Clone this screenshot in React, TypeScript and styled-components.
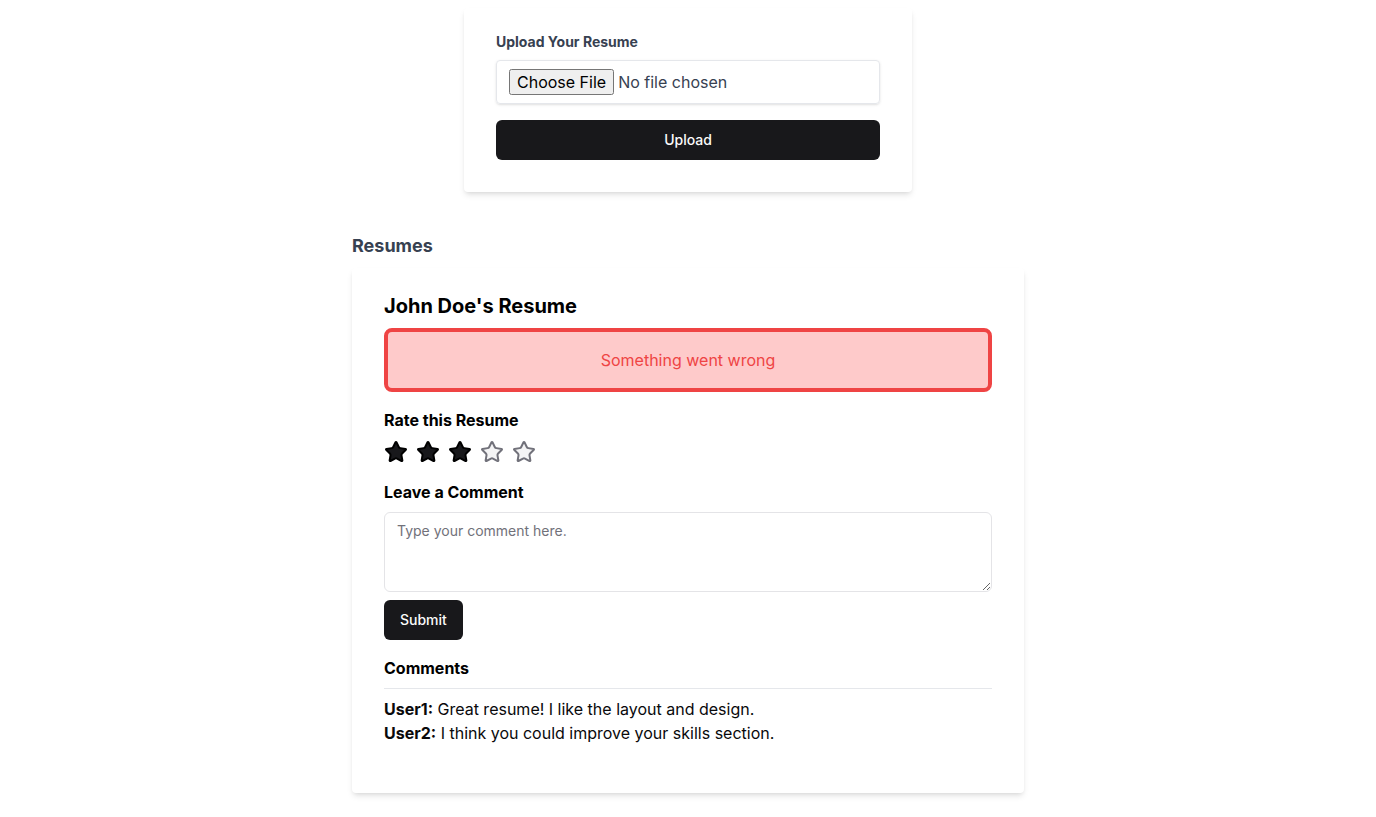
import React, { useState } from "react";
import styled, { createGlobalStyle } from "styled-components";
import { Star } from "lucide-react";

const GlobalStyle = createGlobalStyle`
  *, *::before, *::after { box-sizing: border-box; }
  body {
    margin: 0;
    background: #fff;
    color: #09090b;
    font-family: Inter, "Liberation Sans", sans-serif;
    font-size: 16px;
    line-height: 24px;
  }
  h1, h2, h3, p, ul { margin: 0; padding: 0; }
  button, input, textarea { font: inherit; color: inherit; margin: 0; }
`;

const Page = styled.main`
  display: flex;
  flex-direction: column;
  align-items: center;
  gap: 40px;
  padding: 8px 16px 24px;
`;

const cardShadow = "0 4px 6px -1px rgba(0, 0, 0, 0.1), 0 2px 4px -2px rgba(0, 0, 0, 0.1)";

const UploadCard = styled.form`
  width: 100%;
  max-width: 448px;
  padding: 24px 32px 32px;
  border-radius: 4px;
  background: #fff;
  box-shadow: ${cardShadow};
`;

const UploadLabel = styled.label`
  display: block;
  margin-bottom: 8px;
  color: #374151;
  font-size: 14px;
  line-height: 20px;
  font-weight: 700;
`;

const FileInput = styled.input`
  display: block;
  width: 100%;
  margin-bottom: 16px;
  padding: 8px 12px;
  border: 1px solid #e5e7eb;
  border-radius: 4px;
  color: #374151;
  line-height: 20px;
  box-shadow: 0 1px 3px rgba(0, 0, 0, 0.1), 0 1px 2px -1px rgba(0, 0, 0, 0.1);

  &::file-selector-button {
    font: inherit;
  }
`;

const Button = styled.button<{ $full?: boolean }>`
  display: block;
  width: ${(p) => (p.$full ? "100%" : "auto")};
  height: 40px;
  padding: 8px 16px;
  border: 0;
  border-radius: 6px;
  background: #18181b;
  color: #fafafa;
  font-size: 14px;
  line-height: 20px;
  font-weight: 500;
  cursor: pointer;
`;

const Resumes = styled.section`
  width: 100%;
  max-width: 672px;
`;

const SectionTitle = styled.h1`
  margin-bottom: 8px;
  color: #374151;
  font-size: 18px;
  line-height: 28px;
  font-weight: 700;
`;

const ResumeCard = styled.article`
  padding: 24px 32px 48px;
  border-radius: 4px;
  background: #fff;
  box-shadow: ${cardShadow};
`;

const ResumeTitle = styled.h2`
  margin-bottom: 8px;
  font-size: 20px;
  line-height: 28px;
  font-weight: 700;
  color: #000;
`;

const ErrorBox = styled.div`
  margin-bottom: 16px;
  padding: 16px;
  border: 4px solid #ef4444;
  border-radius: 8px;
  background: #fecaca;
  color: #ef4444;
  text-align: center;
`;

const Block = styled.section`
  margin-bottom: 16px;
`;

const Heading = styled.h3`
  margin-bottom: 8px;
  font-size: 16px;
  line-height: 24px;
  font-weight: 700;
  color: #000;
`;

const Stars = styled.div`
  display: flex;
  gap: 8px;
`;

const StarButton = styled.button<{ $on: boolean }>`
  display: block;
  width: 24px;
  height: 24px;
  padding: 0;
  border: 0;
  background: none;
  color: ${(p) => (p.$on ? "#000" : "#71717a")};
  cursor: pointer;

  svg {
    display: block;
    fill: ${(p) => (p.$on ? "#18181b" : "#f4f4f5")};
  }
`;

const CommentBox = styled.textarea`
  display: block;
  width: 100%;
  height: 80px;
  margin-bottom: 8px;
  padding: 8px 12px;
  border: 1px solid #e4e4e7;
  border-radius: 6px;
  background: #fff;
  font-size: 14px;
  line-height: 20px;
  resize: vertical;

  &::placeholder { color: #71717a; }
`;

const CommentList = styled.ul`
  padding-top: 8px;
  border-top: 1px solid #e5e7eb;
  list-style: none;
`;

const comments = [
  { user: "User1", text: "Great resume! I like the layout and design." },
  { user: "User2", text: "I think you could improve your skills section." },
];

export default function App() {
  const [rating, setRating] = useState(3);

  return (
    <>
      <GlobalStyle />
      <Page>
        <UploadCard onSubmit={(e) => e.preventDefault()}>
          <UploadLabel htmlFor="resume">Upload Your Resume</UploadLabel>
          <FileInput id="resume" type="file" />
          <Button $full type="submit">Upload</Button>
        </UploadCard>
        <Resumes>
          <SectionTitle>Resumes</SectionTitle>
          <ResumeCard>
            <ResumeTitle>John Doe's Resume</ResumeTitle>
            <ErrorBox role="alert">Something went wrong</ErrorBox>
            <Block>
              <Heading>Rate this Resume</Heading>
              <Stars>
                {[1, 2, 3, 4, 5].map((n) => (
                  <StarButton
                    key={n}
                    type="button"
                    $on={n <= rating}
                    aria-label={`Rate ${n} of 5`}
                    onClick={() => setRating(n)}
                  >
                    <Star size={24} />
                  </StarButton>
                ))}
              </Stars>
            </Block>
            <Block>
              <Heading>
                <label htmlFor="comment">Leave a Comment</label>
              </Heading>
              <CommentBox id="comment" placeholder="Type your comment here." />
              <Button type="button">Submit</Button>
            </Block>
            <section>
              <Heading>Comments</Heading>
              <CommentList>
                {comments.map((c) => (
                  <li key={c.user}>
                    <strong>{c.user}:</strong> {c.text}
                  </li>
                ))}
              </CommentList>
            </section>
          </ResumeCard>
        </Resumes>
      </Page>
    </>
  );
}
